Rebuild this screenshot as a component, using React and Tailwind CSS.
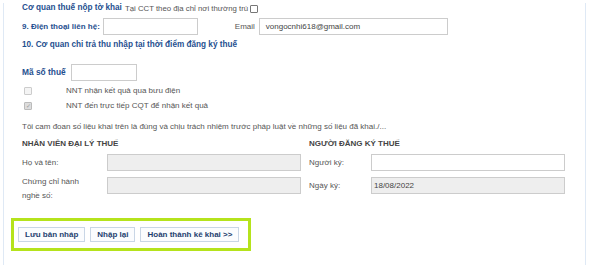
export default function App() {
  const label = "font-bold text-[#1f4f8f]";
  return (
    <div className="w-[593px] h-[265px] bg-white overflow-hidden font-['Liberation_Sans',Arial,sans-serif] text-[8px] text-[#555]">
      <div className="ml-[3px] w-[583px] h-full border-l border-r border-[#dfe9f5] pl-[18px]">
        {/* row 1 */}
        <div className="flex items-center h-[11px] mt-[3px]">
          <span className={`${label} text-[8.2px]`}>Cơ quan thuế nộp tờ khai</span>
          <span className="ml-[3px] text-[7.8px]">Tại CCT theo địa chỉ nơi thường trú</span>
          <span className="ml-[2px] w-[8px] h-[8px] border border-[#777] rounded-[1px] bg-white" />
        </div>
        {/* row 2 */}
        <div className="flex items-center mt-[4px] h-[17px]">
          <span className={label}>9. Điện thoại liên hệ:</span>
          <div className="ml-[3px] w-[95px] h-[17px] border border-[#ccc] bg-white" />
          <span className="ml-[37px]">Email</span>
          <div className="ml-[4px] w-[189px] h-[17px] border border-[#ccc] bg-white flex items-center pl-[6px] text-[#444]">
            vongocnhi618@gmail.com
          </div>
        </div>
        {/* row 3 */}
        <div className="flex items-center mt-[4px] h-[12px]">
          <span className={`${label} text-[8.2px]`}>10. Cơ quan chi trả thu nhập tại thời điểm đăng ký thuế</span>
        </div>
        {/* MST */}
        <div className="flex items-center mt-[13px] h-[17px]">
          <span className={`${label} text-[8.4px]`}>Mã số thuế</span>
          <div className="ml-[5px] w-[66px] h-[17px] border border-[#ccc] bg-white" />
        </div>
        {/* checkboxes */}
        <div className="flex items-center mt-[3px] h-[14px]">
          <span className="ml-[2px] w-[8px] h-[8px] border border-[#ccc] bg-[#f4f4f4] rounded-[1px]" />
          <span className="ml-[34px]">NNT nhận kết quả qua bưu điện</span>
        </div>
        <div className="flex items-center mt-[1px] h-[14px]">
          <span className="ml-[2px] w-[8px] h-[8px] border border-[#bbb] bg-[#ddd] rounded-[1px] flex items-center justify-center text-[6px] leading-none text-[#999]">✓</span>
          <span className="ml-[34px]">NNT đến trực tiếp CQT để nhận kết quả</span>
        </div>
        {/* cam doan */}
        <div className="flex items-center mt-[8px] h-[12px]">
          <span>Tôi cam đoan số liệu khai trên là đúng và chịu trách nhiệm trước pháp luật về những số liệu đã khai./...</span>
        </div>
        {/* signatures */}
        <div className="flex mt-[5px]">
          <div className="w-[287px]">
            <div className="h-[12px] flex items-center font-semibold text-[#444] text-[8px]">NHÂN VIÊN ĐẠI LÝ THUẾ</div>
            <div className="flex items-center mt-[4px] h-[17px]">
              <span className="w-[85px]">Họ và tên:</span>
              <div className="w-[194px] h-[17px] border border-[#ccc] bg-[#eee]" />
            </div>
            <div className="flex items-start mt-[6px]">
              <span className="w-[85px] leading-[14px] -mt-[2px]">Chứng chỉ hành<br />nghề số:</span>
              <div className="w-[194px] h-[17px] border border-[#ccc] bg-[#eee]" />
            </div>
          </div>
          <div>
            <div className="h-[12px] flex items-center font-semibold text-[#444] text-[8px]">NGƯỜI ĐĂNG KÝ THUẾ</div>
            <div className="flex items-center mt-[4px] h-[17px]">
              <span className="w-[62px]">Người ký:</span>
              <div className="w-[194px] h-[17px] border border-[#ccc] bg-white" />
            </div>
            <div className="flex items-center mt-[6px] h-[17px]">
              <span className="w-[62px]">Ngày ký:</span>
              <div className="w-[194px] h-[17px] border border-[#ccc] bg-[#eee] flex items-center pl-[2px] text-[#444]">18/08/2022</div>
            </div>
          </div>
        </div>
        {/* buttons */}
        <div className="-ml-[11px] mt-[15px] w-[240px] h-[33px] border-[3px] border-[#b5e31c] flex items-center gap-[5px] pl-[4px]">
          {["Lưu bản nháp", "Nhập lại", "Hoàn thành kê khai >>"].map((t) => (
            <button
              key={t}
              className="h-[15px] px-[6px] border border-[#c9d6e6] bg-[#fbfcfe] font-bold text-[#1f3f6f] text-[8px] leading-none"
            >
              {t}
            </button>
          ))}
        </div>
      </div>
    </div>
  );
}
